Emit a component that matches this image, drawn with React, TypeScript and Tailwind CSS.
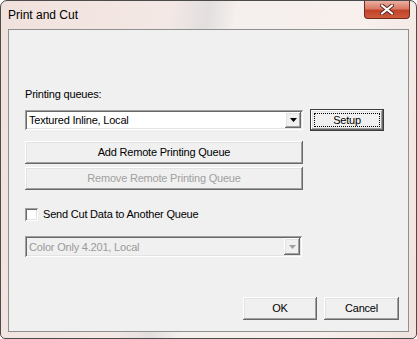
const raised =
  "shadow-[inset_-1px_-1px_#696969,inset_1px_1px_#ffffff,inset_-2px_-2px_#a0a0a0,inset_2px_2px_#e3e3e3]";
const sunken =
  "shadow-[inset_1px_1px_#a0a0a0,inset_-1px_-1px_#ffffff,inset_2px_2px_#696969,inset_-2px_-2px_#e3e3e3]";

function Arrow({ color }: { color: string }) {
  return (
    <svg width="7" height="4" viewBox="0 0 7 4">
      <path d="M0 0h7L3.5 4z" fill={color} />
    </svg>
  );
}

function Combo({ text, disabled }: { text: string; disabled?: boolean }) {
  return (
    <div
      className={`flex items-stretch h-full w-full ${sunken} ${
        disabled ? "bg-[#f0f0f0] text-[#9a9a9a]" : "bg-white text-black"
      }`}
    >
      <div className="flex-1 flex items-center pl-[4px] pt-px">{text}</div>
      <div
        className={`w-[16px] my-[2px] mr-[2px] flex items-center justify-center bg-[#f0f0f0] ${raised}`}
      >
        <Arrow color={disabled ? "#a0a0a0" : "#000"} />
      </div>
    </div>
  );
}

function Button({
  label,
  className,
  disabled,
}: {
  label: string;
  className: string;
  disabled?: boolean;
}) {
  return (
    <div
      className={`flex items-center justify-center bg-[#f0f0f0] ${raised} ${className} ${
        disabled ? "text-[#a0a0a0]" : "text-black"
      }`}
    >
      {label}
    </div>
  );
}

export default function App() {
  return (
    <div className="w-[417px] h-[339px] bg-white font-['Liberation_Sans',Arial,sans-serif]">
      <div className="flex flex-col w-full h-full border border-[#4b4b4b] rounded-t-[7px] rounded-b-[5px] overflow-hidden bg-[linear-gradient(100deg,#f1e1dd_0%,#f3e8e5_36%,#e2dfde_44%,#f5efed_50%,#f7f0ed_78%,#f1e3df_100%)]">
        {/* Title bar */}
        <div className="h-[28px] flex items-start shrink-0">
          <div className="pl-[7px] pt-[7px] text-[12px] leading-[14px] text-black">
            Print and Cut
          </div>
          <div className="ml-auto mr-[6px] w-[46px] h-[18px] rounded-b-[4px] border border-t-0 border-[#6e2a1f] bg-[linear-gradient(180deg,#eab0a2_0%,#d97a64_45%,#c2432b_55%,#cf5a3c_100%)] flex items-center justify-center">
            <svg width="14" height="11" viewBox="0 0 14 11">
              <path
                d="M2 1.5L12 9.5M12 1.5L2 9.5"
                stroke="#5a2a22"
                strokeWidth="4"
                strokeLinecap="round"
              />
              <path
                d="M2 1.5L12 9.5M12 1.5L2 9.5"
                stroke="#ffffff"
                strokeWidth="2.2"
                strokeLinecap="round"
              />
            </svg>
          </div>
        </div>

        {/* Client area */}
        <div className="flex-1 mx-[7px] mb-[6px] border border-[#8e8f8f] bg-[#f0f0f0] text-[11px] leading-[13px] tracking-[-0.2px] flex flex-col pl-[16px] pr-[9px] pt-[58px]">
          <div>Printing queues:</div>

          <div className="mt-[8px] flex items-start gap-[7px]">
            <div className="w-[278px] h-[20px] mt-px">
              <Combo text="Textured Inline, Local" />
            </div>
            <div className="w-[74px] h-[22px] border border-[#3c3c3c] bg-[#f0f0f0]">
              <div className={`w-full h-full p-[3px] ${raised}`}>
                <div className="w-full h-full border border-dotted border-black flex items-center justify-center">
                  Setup
                </div>
              </div>
            </div>
          </div>

          <Button label="Add Remote Printing Queue" className="mt-[10px] w-[278px] h-[23px]" />
          <Button
            label="Remove Remote Printing Queue"
            className="mt-[3px] w-[278px] h-[23px]"
            disabled
          />

          <div className="mt-[18px] flex items-center gap-[5px] h-[13px]">
            <div className={`w-[13px] h-[13px] bg-white ${sunken}`} />
            <div>Send Cut Data to Another Queue</div>
          </div>

          <div className="mt-[15px] w-[277px] h-[21px]">
            <Combo text="Color Only 4.201, Local" disabled />
          </div>

          <div className="mt-[40px] flex justify-end gap-[7px]">
            <Button label="OK" className="w-[74px] h-[23px]" />
            <Button label="Cancel" className="w-[75px] h-[23px]" />
          </div>
        </div>
      </div>
    </div>
  );
}
